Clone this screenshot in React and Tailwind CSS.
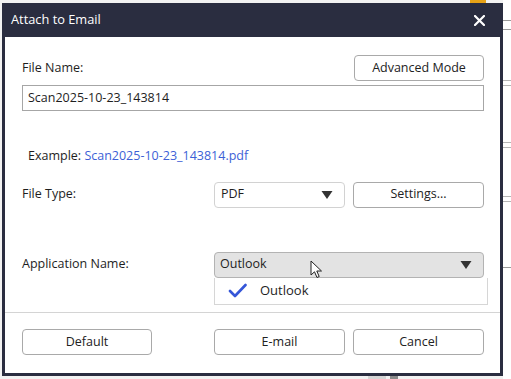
import React from 'react';

const font = { fontFamily: '"Open Sans", "Noto Sans", sans-serif' };

const Button = ({ children, className = '' }) => (
  <button className={`h-[26px] rounded-[4px] border border-[#a9a9a9] bg-white text-[12.5px] text-[#222] ${className}`}>
    {children}
  </button>
);

const Arrow = () => (
  <svg width="12" height="10" viewBox="0 0 12 10" className="shrink-0">
    <path d="M0.5 1 L11.5 1 L6 9 Z" fill="#333" />
  </svg>
);

const Cursor = () => (
  <svg width="13" height="19" viewBox="0 0 13 19" className="absolute left-[95px] top-[7px]">
    <path d="M1 1 L1 15 L4.5 11.8 L7 17.5 L9.2 16.5 L6.8 11 L11.5 11 Z" fill="white" stroke="#222" strokeWidth="1" strokeLinejoin="round" />
  </svg>
);

export default function App() {
  return (
    <div className="relative h-[379px] w-[511px] overflow-hidden bg-[#f2f2f2]" style={font}>
      {/* background app behind the dialog */}
      <div className="absolute right-0 top-0 h-full w-[8px] bg-white">
        <div className="mt-[20px] h-px bg-[#9a9a9a]" />
        <div className="mt-[8px] h-px bg-[#9a9a9a]" />
        <div className="mt-[50px] h-px bg-[#b5b5b5]" />
        <div className="mt-[4px] h-px bg-[#b5b5b5]" />
        <div className="mt-[56px] h-px bg-[#b5b5b5]" />
        <div className="mt-[4px] h-px bg-[#b5b5b5]" />
        <div className="mt-[48px] h-px bg-[#b5b5b5]" />
        <div className="mt-[4px] h-px bg-[#b5b5b5]" />
        <div className="mt-[65px] h-px bg-[#9a9a9a]" />
      </div>
      <div className="absolute left-[470px] top-0 h-[3px] w-[16px] bg-[#e8a317]" />
      <div className="absolute bottom-0 left-[368px] h-[3px] w-[18px] bg-[#d6d6d6]" />
      <div className="absolute bottom-0 left-[390px] h-[3px] w-[8px] bg-[#8a8a8a]" />

      <div className="relative ml-[2px] mt-[3px] flex h-[373px] w-[501px] flex-col border-x-[3px] border-b-[3px] border-[#2a2d40] bg-white">
        {/* title bar */}
        <div className="-mx-[3px] flex h-[34px] shrink-0 items-center justify-between bg-[#2a2d40] pl-[9px] pr-[18px]">
          <span className="text-[12.8px] text-white">Attach to Email</span>
          <svg width="11" height="11" viewBox="0 0 11 11">
            <path d="M1 1 L10 10 M10 1 L1 10" stroke="white" strokeWidth="2.2" strokeLinecap="round" />
          </svg>
        </div>

        <div className="flex flex-1 flex-col pl-[17px] pr-[16px] text-[12.5px] text-[#1e1e1e]">
          <div className="mt-[18px] flex h-[26px] items-center justify-between">
            <span>File Name:</span>
            <Button className="w-[130px]">Advanced Mode</Button>
          </div>
          <div className="mt-[4px] flex h-[26px] items-center border border-[#a6a6a6] px-[5px]">
            Scan2025-10-23_143814
          </div>

          <div className="mt-[36px] pl-[6px]">
            Example: <span className="text-[#3d5fd6]">Scan2025-10-23_143814.pdf</span>
          </div>

          <div className="mt-[16px] flex h-[26px] items-center">
            <span className="w-[192px]">File Type:</span>
            <div className="flex h-[26px] w-[131px] items-center justify-between rounded-[4px] border border-[#d2d2d2] pl-[6px] pr-[11px]">
              <span>PDF</span>
              <Arrow />
            </div>
            <Button className="ml-[8px] w-[131px]">Settings...</Button>
          </div>

          <div className="mt-[44px] flex h-[26px] items-center">
            <span className="w-[192px]">Application Name:</span>
            <div className="relative flex h-[26px] flex-1 items-center justify-between rounded-[4px] border border-[#b3b3b3] bg-[#e3e3e3] pl-[5px] pr-[11px]">
              <span>Outlook</span>
              <Arrow />
              <Cursor />
            </div>
          </div>
          <div className="-mr-[4px] ml-[192px] flex h-[27px] items-center border-x border-b border-[#d6d6d6] pl-[13px]">
            <svg width="19" height="15" viewBox="0 0 19 15">
              <path d="M2 8 L7 13 L17.5 2" fill="none" stroke="#3556d8" strokeWidth="2.6" strokeLinecap="round" strokeLinejoin="round" />
            </svg>
            <span className="ml-[13px] text-[13px]">Outlook</span>
          </div>
        </div>

        <div className="h-px shrink-0 bg-[#d4d4d4]" />
        <div className="flex h-[60px] shrink-0 items-start pl-[17px] pr-[16px] pt-[16px]">
          <Button className="w-[130px]">Default</Button>
          <Button className="ml-[62px] w-[131px]">E-mail</Button>
          <Button className="ml-[8px] w-[131px]">Cancel</Button>
        </div>
      </div>
    </div>
  );
}
